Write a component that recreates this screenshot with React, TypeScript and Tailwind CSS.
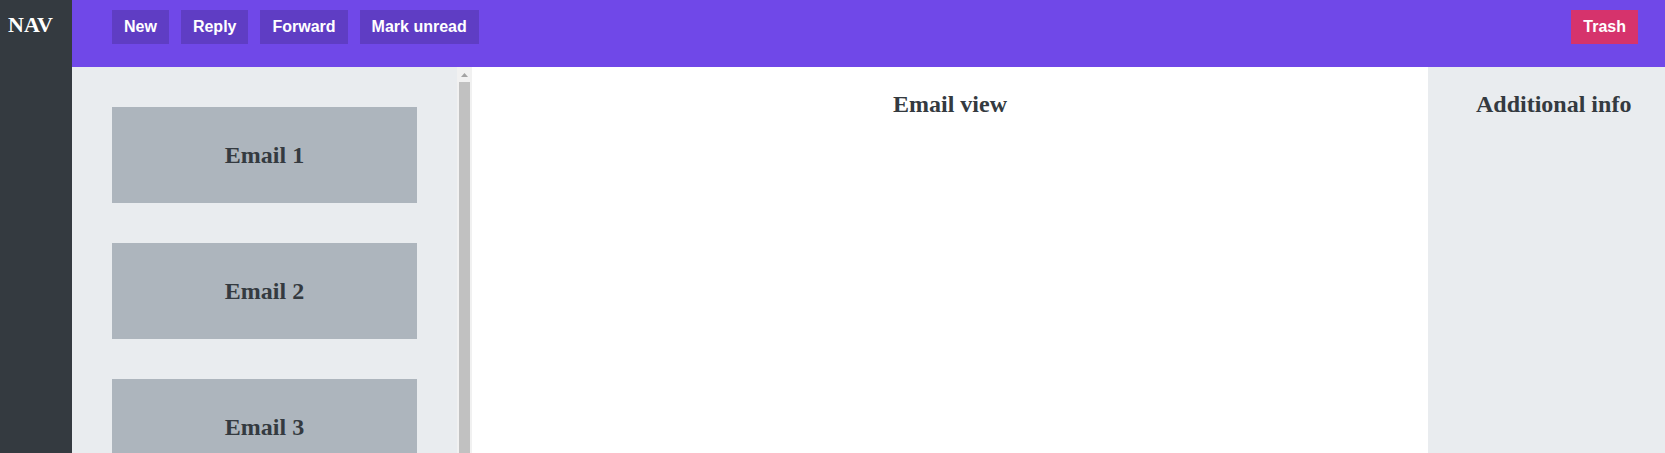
const actions = ["New", "Reply", "Forward", "Mark unread"];
const emails = ["Email 1", "Email 2", "Email 3"];

function ToolButton({ label, danger }: { label: string; danger?: boolean }) {
  return (
    <button
      className={
        danger
          ? "bg-[#d6336c] px-3 py-2 text-[16px] leading-[18px] font-bold text-white"
          : "bg-[#5f3dc4] px-3 py-2 text-[16px] leading-[18px] font-bold text-white"
      }
    >
      {label}
    </button>
  );
}

function Scrollbar() {
  return (
    <div className="flex w-[15px] shrink-0 flex-col bg-[#f1f1f1]">
      <div className="flex h-[15px] items-center justify-center">
        <svg width="7" height="4" viewBox="0 0 7 4">
          <path d="M3.5 0 L7 4 L0 4 Z" fill="#a3a3a3" />
        </svg>
      </div>
      <div className="mx-[2px] flex-1 bg-[#c1c1c1]" />
    </div>
  );
}

export default function App() {
  return (
    <div className="flex h-screen overflow-hidden font-['Liberation_Serif',serif] text-[#343a40]">
      <nav className="w-[72px] shrink-0 bg-[#343a40] pt-3 pl-2">
        <div className="text-[22px] leading-[26px] font-bold text-white">NAV</div>
      </nav>

      <div className="flex min-w-0 flex-1 flex-col">
        <header className="flex h-[67px] shrink-0 items-start justify-between bg-[#7048e8] pt-[10px] pr-[27px] pl-10 font-['Liberation_Sans',sans-serif]">
          <div className="flex gap-3">
            {actions.map((a) => (
              <ToolButton key={a} label={a} />
            ))}
          </div>
          <ToolButton label="Trash" danger />
        </header>

        <div className="flex min-h-0 flex-1">
          <section className="flex w-[400px] shrink-0 bg-[#e9ecef]">
            <div className="flex flex-1 flex-col gap-10 overflow-hidden px-10 pt-10">
              {emails.map((e) => (
                <div
                  key={e}
                  className="flex h-[96px] shrink-0 items-center justify-center bg-[#adb5bd] text-[24px] leading-[28px] font-bold"
                >
                  {e}
                </div>
              ))}
            </div>
            <Scrollbar />
          </section>

          <main className="flex-1 bg-white pt-[23px] text-center">
            <h2 className="text-[24px] leading-[28px] font-bold">Email view</h2>
          </main>

          <aside className="w-[237px] shrink-0 bg-[#e9ecef] pt-[23px] pl-12">
            <h2 className="text-[24px] leading-[28px] font-bold whitespace-nowrap">
              Additional info
            </h2>
          </aside>
        </div>
      </div>
    </div>
  );
}
